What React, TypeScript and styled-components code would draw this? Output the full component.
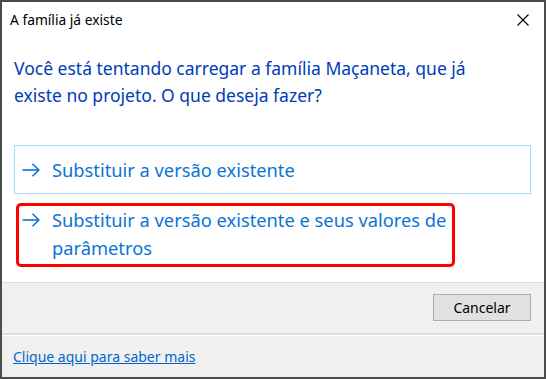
import React from "react";
import styled, { createGlobalStyle } from "styled-components";

const Global = createGlobalStyle`
  html, body { margin: 0; padding: 0; background: #ffffff; }
  body { font-family: "Noto Sans", "Open Sans", sans-serif; }
  * { box-sizing: border-box; }
`;

const Window = styled.div`
  width: 546px;
  height: 379px;
  border: 2px solid #4b4b4b;
  background: #ffffff;
  display: flex;
  flex-direction: column;
  overflow: hidden;
`;

const TitleBar = styled.div`
  height: 35px;
  display: flex;
  align-items: center;
  justify-content: space-between;
  padding: 0 14px 0 8px;
`;

const Title = styled.span`
  font-size: 13.8px;
  color: #000000;
  line-height: 20px;
`;

const CloseButton = styled.button`
  border: none;
  background: transparent;
  padding: 0;
  width: 14px;
  height: 14px;
  display: flex;
  align-items: center;
  justify-content: center;
  svg { display: block; }
`;

const Content = styled.div`
  flex: 1;
  display: flex;
  flex-direction: column;
  padding: 18px 13px 0 12px;
`;

const MainInstruction = styled.p`
  margin: 0;
  max-width: 480px;
  font-size: 17.5px;
  line-height: 27px;
  color: #003cb8;
`;

const Links = styled.div`
  display: flex;
  flex-direction: column;
  margin-top: 36px;
  gap: 9px;
`;

const CommandLink = styled.div<{ $hover?: boolean }>`
  display: flex;
  align-items: flex-start;
  gap: 12px;
  padding: 10px 8px 10px 7px;
  border: 1px solid ${(p) => (p.$hover ? "#a9dbf5" : "transparent")};
  color: #0a74d6;
  font-size: 18.3px;
  line-height: 27px;
`;

const Highlight = styled.div`
  width: 439px;
  margin-left: 2px;
  border: 3px solid #ff0000;
  border-radius: 5px;
  display: flex;
  align-items: flex-start;
  gap: 12px;
  padding: 0 2px 2px 3px;
  color: #0a74d6;
  font-size: 18.3px;
  line-height: 28px;
`;

const Arrow = styled.span`
  flex: none;
  width: 18px;
  height: 27px;
  display: flex;
  align-items: center;
  svg { display: block; }
`;

const ButtonBar = styled.div`
  height: 51px;
  background: #f0f0f0;
  border-top: 1px solid #dfdfdf;
  display: flex;
  align-items: center;
  justify-content: flex-end;
  padding: 0 13px 1px 0;
`;

const Button = styled.button`
  width: 98px;
  height: 27px;
  background: #e1e1e1;
  border: 1px solid #adadad;
  font-family: "Noto Sans", "Open Sans", sans-serif;
  font-size: 14px;
  color: #000000;
  padding: 0;
`;

const Footer = styled.div`
  height: 44px;
  background: #f0f0f0;
  border-top: 2px solid #dfdfdf;
  box-shadow: inset 0 1px 0 #ffffff;
  display: flex;
  align-items: center;
  padding: 0 0 0 11px;
`;

const HelpLink = styled.a`
  font-size: 14px;
  color: #0066cc;
  text-decoration: underline;
  cursor: pointer;
`;

const ArrowIcon = () => (
  <svg width="18" height="14" viewBox="0 0 18 14">
    <path d="M0.5 7 H17" stroke="#0a74d6" strokeWidth="1.6" fill="none" />
    <path d="M10.5 0.8 L16.8 7 L10.5 13.2" stroke="#0a74d6" strokeWidth="1.6" fill="none" />
  </svg>
);

export default function App() {
  return (
    <>
      <Global />
      <Window>
        <TitleBar>
          <Title>A família já existe</Title>
          <CloseButton aria-label="Fechar">
            <svg width="12" height="12" viewBox="0 0 12 12">
              <path d="M0.5 0.5 L11.5 11.5 M11.5 0.5 L0.5 11.5" stroke="#000" strokeWidth="1.1" fill="none" />
            </svg>
          </CloseButton>
        </TitleBar>
        <Content>
          <MainInstruction>
            Você está tentando carregar a família Maçaneta, que já existe no projeto. O que deseja fazer?
          </MainInstruction>
          <Links>
            <CommandLink $hover>
              <Arrow><ArrowIcon /></Arrow>
              <span>Substituir a versão existente</span>
            </CommandLink>
            <Highlight>
              <Arrow><ArrowIcon /></Arrow>
              <span>Substituir a versão existente e seus valores de parâmetros</span>
            </Highlight>
          </Links>
        </Content>
        <ButtonBar>
          <Button>Cancelar</Button>
        </ButtonBar>
        <Footer>
          <HelpLink>Clique aqui para saber mais</HelpLink>
        </Footer>
      </Window>
    </>
  );
}
